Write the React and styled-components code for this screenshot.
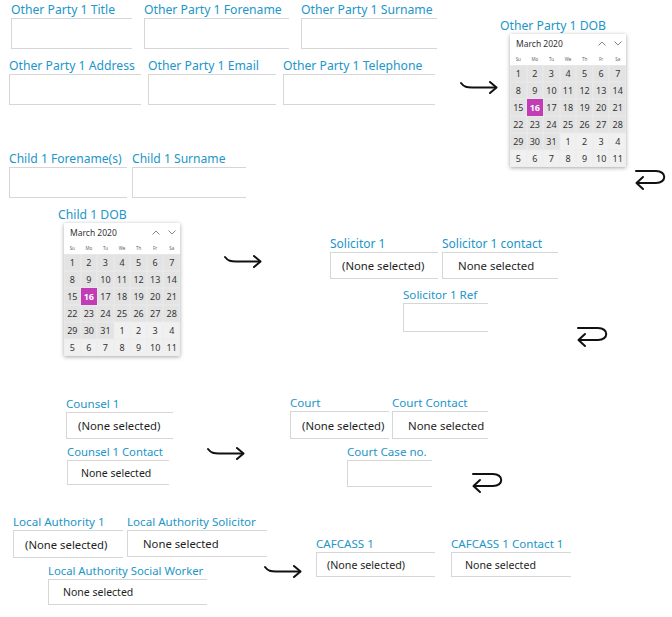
import React from 'react'
import styled, { createGlobalStyle } from 'styled-components'

const GlobalStyle = createGlobalStyle`
  html, body {
    margin: 0;
    padding: 0;
    background: #fff;
  }
  body {
    font-family: 'Noto Sans', 'Open Sans', sans-serif;
  }
`

const Canvas = styled.div`
  position: relative;
  width: 672px;
  height: 617px;
  overflow: hidden;
  background: #fff;
`

const Node = styled.div`
  position: absolute;
  left: ${({ x }) => x}px;
  top: ${({ y }) => y}px;
`

const Cluster = styled(Node)`
  display: flex;
  flex-direction: column;
  align-items: flex-start;
  gap: ${({ gap }) => gap || 0}px;
`

const Row = styled.div`
  display: flex;
  align-items: flex-start;
  gap: ${({ gap }) => gap || 0}px;
  padding-left: ${({ inset }) => inset || 0}px;
`

const FieldWrap = styled.div`
  display: flex;
  flex-direction: column;
  margin-left: ${({ inset }) => inset || 0}px;
`

const Label = styled.div`
  height: 16px;
  line-height: 16px;
  font-size: ${({ size }) => size || 11.6}px;
  color: #2196c8;
  white-space: nowrap;
`

const Box = styled.div`
  box-sizing: border-box;
  width: ${({ w }) => w}px;
  height: ${({ h }) => h}px;
  border: 1px solid #d6d6d6;
  border-right: none;
  background: #fff;
  display: flex;
  align-items: center;
  padding-left: ${({ indent }) => indent || 11}px;
  font-size: ${({ valueSize }) => valueSize || 11.3}px;
  color: #1e1e1e;
  white-space: nowrap;
`

const Field = ({ label, size, w, h, value, indent, valueSize, inset }) => (
  <FieldWrap inset={inset}>
    <Label size={size}>{label}</Label>
    <Box w={w} h={h} indent={indent} valueSize={valueSize}>{value}</Box>
  </FieldWrap>
)

const CalWrap = styled.div`
  display: flex;
  flex-direction: column;
  align-items: flex-start;
  margin-left: ${({ inset }) => inset || 0}px;
`

const Calendar = styled.div`
  width: 116px;
  margin-left: ${({ offset }) => offset}px;
  background: #fff;
  box-shadow: 0 1px 4px rgba(0, 0, 0, 0.35);
  display: flex;
  flex-direction: column;
`

const CalHeader = styled.div`
  height: 19px;
  display: flex;
  align-items: center;
  justify-content: space-between;
  padding: 0 4px 0 6px;
  font-size: 8.5px;
  color: #333;
`

const Chevrons = styled.div`
  display: flex;
  gap: 8px;
  align-items: center;
`

const DayNames = styled.div`
  height: 12px;
  display: grid;
  grid-template-columns: repeat(7, 1fr);
  align-items: center;
  font-size: 4.5px;
  color: #666;
  text-align: center;
`

const Grid = styled.div`
  display: grid;
  grid-template-columns: repeat(7, 1fr);
  grid-auto-rows: 17px;
`

const Day = styled.div`
  display: flex;
  align-items: center;
  justify-content: center;
  font-size: 9px;
  color: ${({ selected }) => (selected ? '#fff' : '#333')};
  font-weight: ${({ selected }) => (selected ? 700 : 400)};
  background: ${({ selected, other }) => (selected ? '#c13cb5' : other ? '#f0f0f0' : '#e3e3e3')};
  box-shadow: ${({ selected }) => (selected ? 'none' : 'inset 0 0 0 0.5px #ececec')};
`

const Chevron = ({ up }) => (
  <svg width="8" height="5" viewBox="0 0 8 5">
    <path
      d={up ? 'M0.5 4.5 L4 1 L7.5 4.5' : 'M0.5 0.5 L4 4 L7.5 0.5'}
      fill="none"
      stroke="#777"
      strokeWidth="0.9"
    />
  </svg>
)

const days = [
  ...Array.from({ length: 31 }, (_, i) => ({ n: i + 1 })),
  ...Array.from({ length: 11 }, (_, i) => ({ n: i + 1, other: true })),
]

const DatePicker = ({ label, offset, inset }) => (
  <CalWrap inset={inset}>
    <Label size={12.2}>{label}</Label>
    <Calendar offset={offset}>
      <CalHeader>
        <span>March 2020</span>
        <Chevrons>
          <Chevron up />
          <Chevron />
        </Chevrons>
      </CalHeader>
      <DayNames>
        {['Su', 'Mo', 'Tu', 'We', 'Th', 'Fr', 'Sa'].map(d => <span key={d}>{d}</span>)}
      </DayNames>
      <Grid>
        {days.map((d, i) => (
          <Day key={i} other={d.other} selected={!d.other && d.n === 16}>{d.n}</Day>
        ))}
      </Grid>
    </Calendar>
  </CalWrap>
)

const Arrow = ({ x, y }) => (
  <Node x={x} y={y}>
    <svg width="38" height="14" viewBox="0 0 38 14">
      <path d="M1 3 C4 7 7 7.5 12 7.5 L36 7.5" fill="none" stroke="#111" strokeWidth="2" strokeLinecap="round" />
      <path d="M30 2 L36.5 7.5 L30 13" fill="none" stroke="#111" strokeWidth="2" strokeLinecap="round" strokeLinejoin="round" />
    </svg>
  </Node>
)

const ReturnArrow = ({ x, y }) => (
  <Node x={x} y={y}>
    <svg width="36" height="24" viewBox="0 0 36 24">
      <path d="M3 3 L23 3 C34 3 34 15 23 15 L4 15" fill="none" stroke="#111" strokeWidth="2" strokeLinecap="round" />
      <path d="M10 9 L3.5 15 L10 21" fill="none" stroke="#111" strokeWidth="2" strokeLinecap="round" strokeLinejoin="round" />
    </svg>
  </Node>
)

const NONE = '(None selected)'
const NONE2 = 'None selected'

export default function App() {
  return (
    <>
      <GlobalStyle />
      <Canvas>
        <Cluster x={9} y={2} gap={9}>
          <Row gap={12} inset={2}>
            <Field label="Other Party 1 Title" size={12.2} w={121} h={31} />
            <Field label="Other Party 1 Forename" size={12.2} w={145} h={31} />
            <Field label="Other Party 1 Surname" size={12.2} w={136} h={31} />
          </Row>
          <Row gap={7}>
            <Field label="Other Party 1 Address" size={12.2} w={132} h={31} />
            <Field label="Other Party 1 Email" size={12.2} w={128} h={31} />
            <Field label="Other Party 1 Telephone" size={12.2} w={152} h={31} />
          </Row>
        </Cluster>
        <Arrow x={460} y={77} />
        <Cluster x={500} y={18}>
          <DatePicker label="Other Party 1 DOB" offset={10} />
        </Cluster>
        <ReturnArrow x={633} y={168} />

        <Cluster x={9} y={151} gap={9}>
          <Row gap={5}>
            <Field label="Child 1 Forename(s)" size={12.1} w={118} h={31} />
            <Field label="Child 1 Surname" size={12.1} w={114} h={31} />
          </Row>
          <DatePicker label="Child 1 DOB" offset={6} inset={49} />
        </Cluster>
        <Arrow x={224} y={251} />

        <Cluster x={330} y={236} gap={8}>
          <Row gap={4}>
            <Field label="Solicitor 1" size={12} w={108} h={27} value={NONE} indent={11} />
            <Field label="Solicitor 1 contact" size={12} w={116} h={27} value={NONE2} indent={15} valueSize={11.4} />
          </Row>
          <Field label="Solicitor 1 Ref" w={85} h={29} inset={73} />
        </Cluster>
        <ReturnArrow x={575} y={325} />

        <Cluster x={66} y={396} gap={5}>
          <Field label="Counsel 1" w={107} h={27} value={NONE} indent={11} />
          <Field label="Counsel 1 Contact" size={11.3} w={102} h={25} value={NONE2} indent={13} valueSize={10.5} inset={1} />
        </Cluster>
        <Arrow x={207} y={443} />
        <Cluster x={290} y={395} gap={5}>
          <Row gap={3}>
            <Field label="Court" w={99} h={28} value={NONE} indent={11} />
            <Field label="Court Contact" w={96} h={28} value={NONE2} indent={15} valueSize={11.4} />
          </Row>
          <Field label="Court Case no." w={85} h={27} inset={57} />
        </Cluster>
        <ReturnArrow x={470} y={471} />

        <Cluster x={13} y={514} gap={5}>
          <Row gap={4}>
            <Field label="Local Authority 1" w={110} h={28} value={NONE} indent={11} />
            <Field label="Local Authority Solicitor" w={140} h={27} value={NONE2} indent={15} />
          </Row>
          <Field label="Local Authority Social Worker" size={11.3} w={159} h={26} value={NONE2} indent={14} valueSize={10.5} inset={35} />
        </Cluster>
        <Arrow x={264} y={561} />
        <Cluster x={316} y={536}>
          <Row gap={16}>
            <Field label="CAFCASS 1" w={119} h={25} value={NONE} indent={10} valueSize={10.7} />
            <Field label="CAFCASS 1 Contact 1" w={120} h={25} value={NONE2} indent={13} valueSize={10.6} />
          </Row>
        </Cluster>
      </Canvas>
    </>
  )
}
